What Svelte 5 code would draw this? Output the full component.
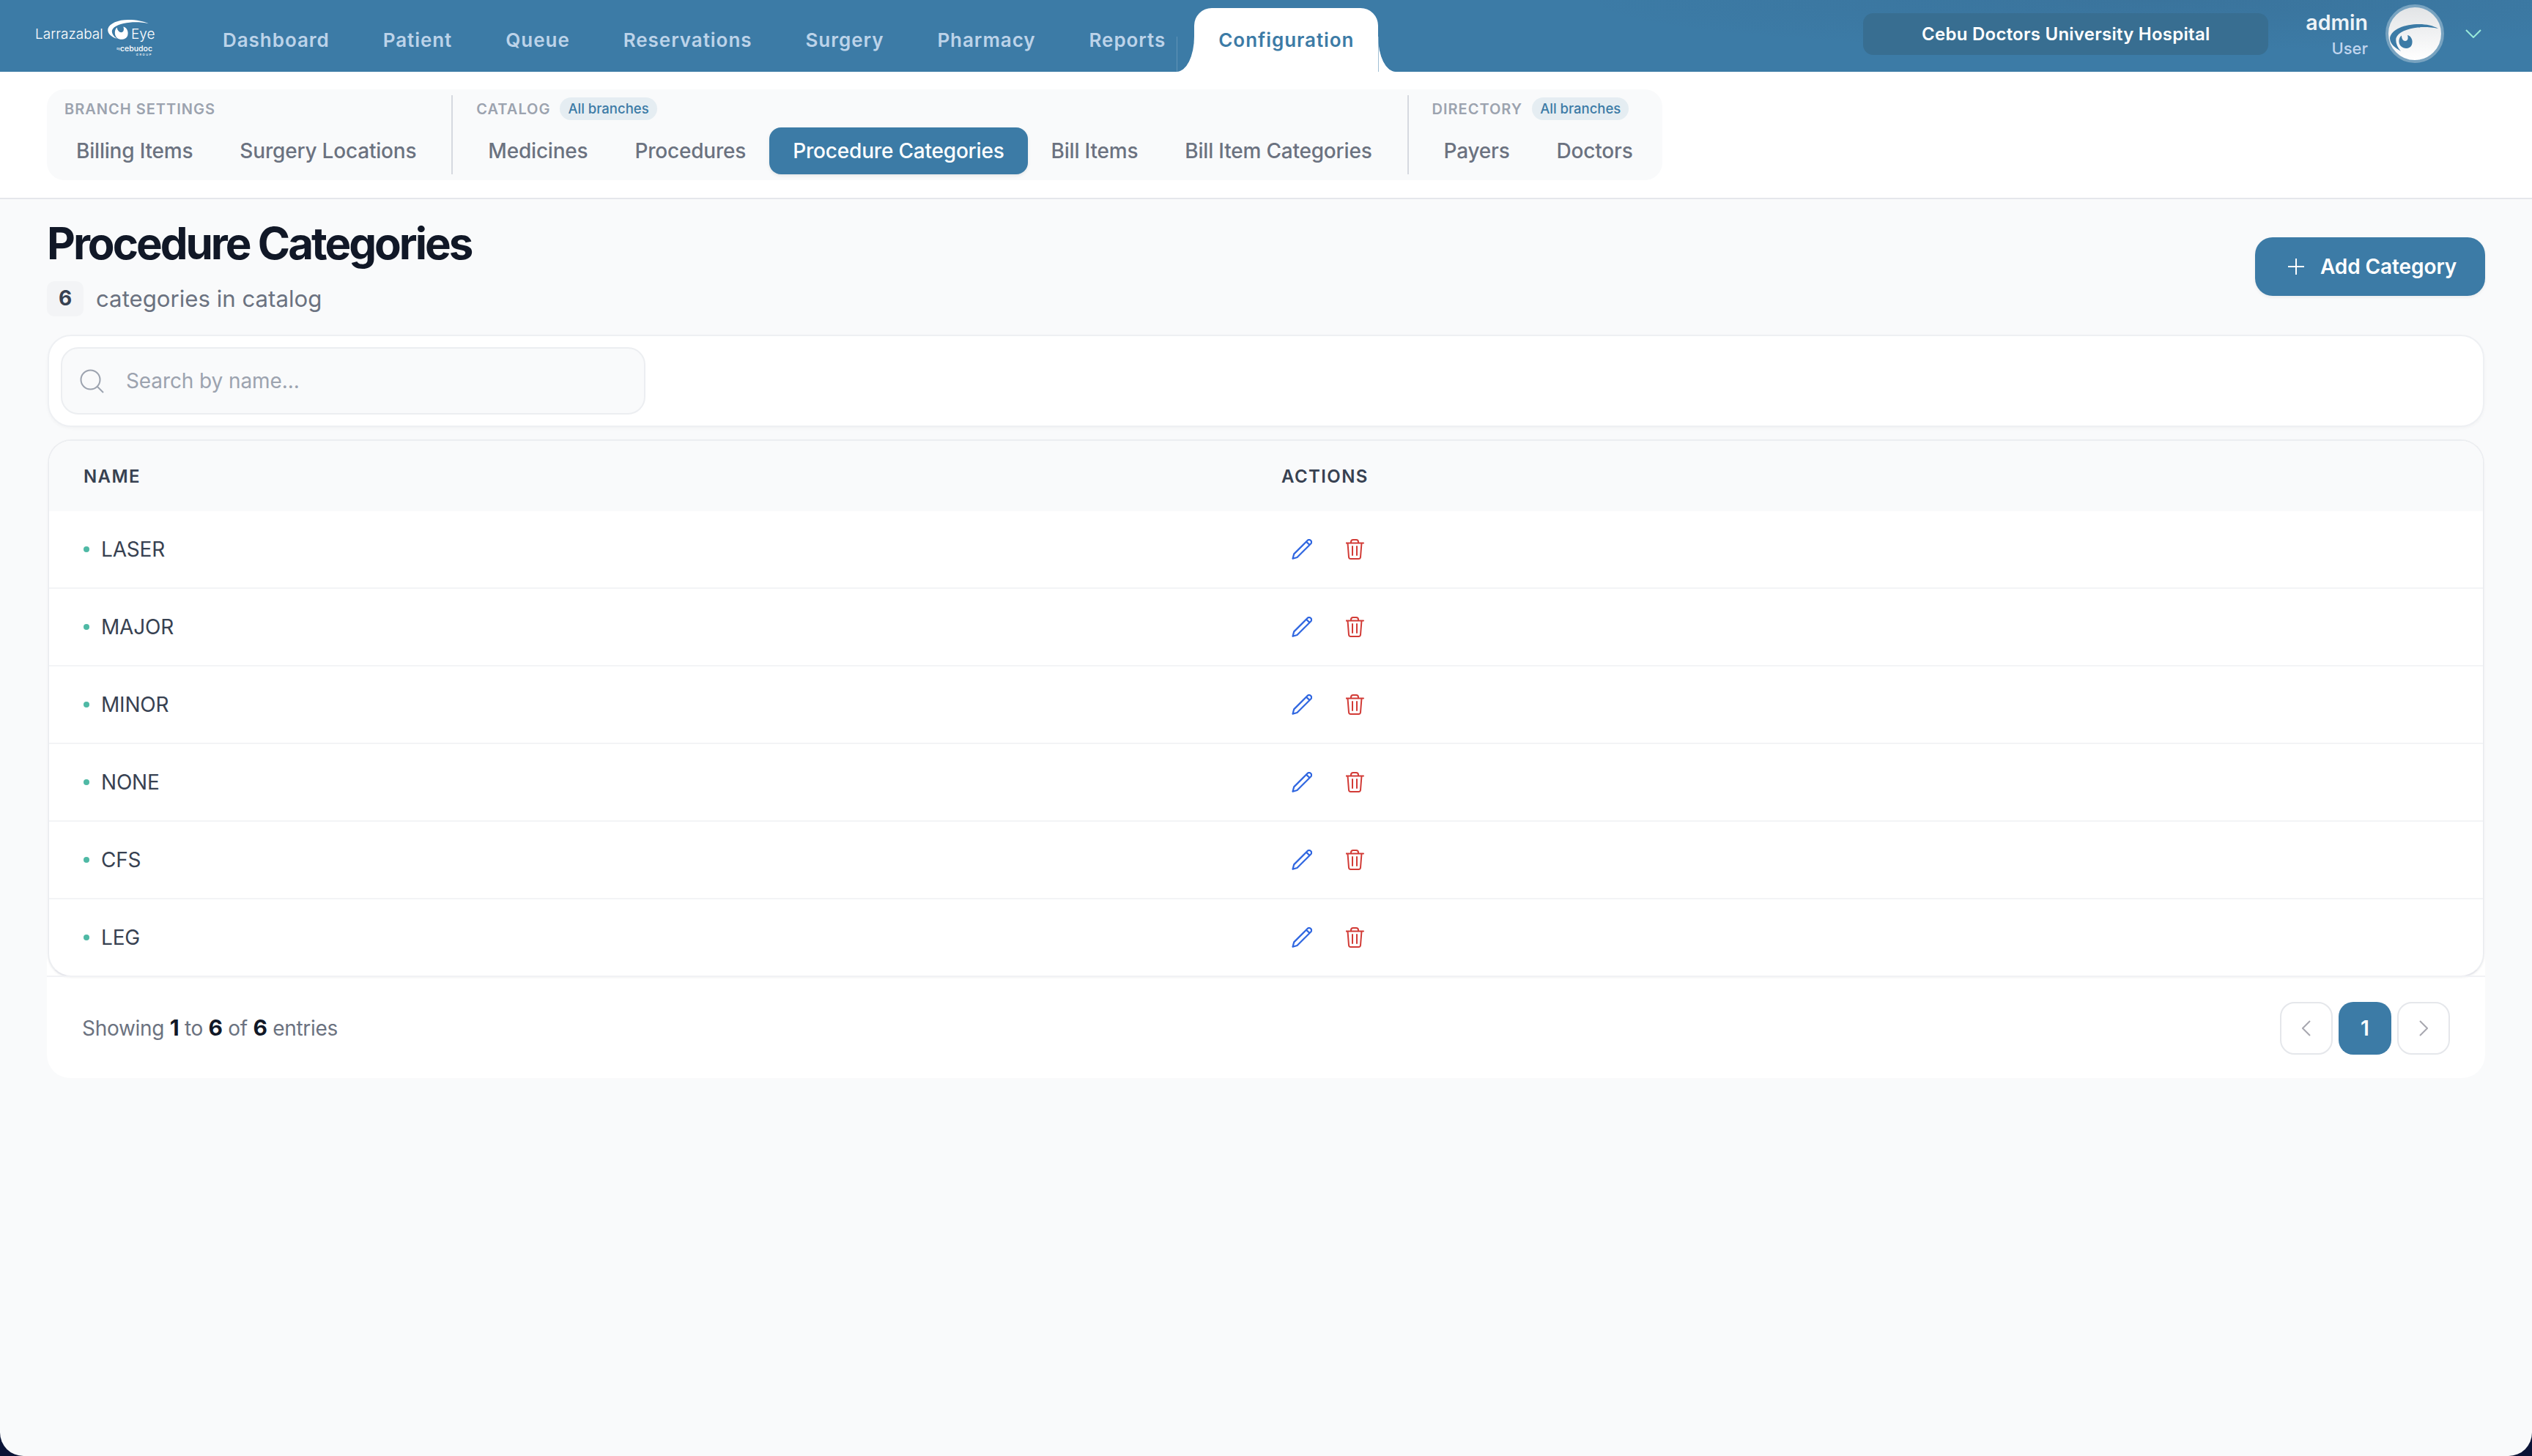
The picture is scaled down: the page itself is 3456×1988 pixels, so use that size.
<script>
  const navItems = ["Dashboard", "Patient", "Queue", "Reservations", "Surgery", "Pharmacy", "Reports"];

  const sections = [
    { label: "Branch Settings", shared: false, tabs: ["Billing Items", "Surgery Locations"] },
    { label: "Catalog", shared: true, tabs: ["Medicines", "Procedures", "Procedure Categories", "Bill Items", "Bill Item Categories"] },
    { label: "Directory", shared: true, tabs: ["Payers", "Doctors"] }
  ];

  const activeTab = "Procedure Categories";
  const categories = ["LASER", "MAJOR", "MINOR", "NONE", "CFS", "LEG"];
</script>

<div class="window">
  <header class="topbar">
    <div class="logo">
      <span class="logo-name">Larrazabal</span>
      <svg class="logo-eye" viewBox="0 0 60 46" aria-hidden="true">
        <path d="M1 14 C3 6 16 1 30 1 C42 1 52 3 59 6.5 C50 4.5 40 4 32 5 C20 6 9 10 7 16 C6 20 9 25 14 28 C7 26 0 21 1 14 Z" fill="#fff" />
        <path d="M14 12 C10 15 10 23 14 27 C19 31 27 29 29 24 C31 18 28 12 23 11 C24.5 15 23.5 19 20 19 C17 19 14.5 16 14 12 Z" fill="#fff" />
      </svg>
      <span class="logo-name eye-word">Eye</span>
      <span class="logo-sub"><small>by</small>cebudoc<em>GROUP</em></span>
    </div>

    <nav class="main-nav">
      {#each navItems as item}
        <span class="nav-item">{item}</span>
      {/each}
      <span class="nav-item active">Configuration</span>
    </nav>

    <div class="top-right">
      <div class="branch">Cebu Doctors University Hospital</div>
      <div class="user">
        <span class="user-name">admin</span>
        <span class="user-role">User</span>
      </div>
      <div class="avatar">
        <svg viewBox="0 0 72 72" aria-hidden="true">
          <path d="M2 42 C4 30 22 23 42 23 C52 23 61 25 68 29 C58 27 48 26.5 40 27.5 C26 29 13 34 10.5 42 C9.5 48 12 54 17 60 C9 55 2 50 2 42 Z" fill="#3c7ba6" />
          <path d="M18 38.5 C14 41 13 49 17 53 C22 58 30 56.5 32 51 C34 45 31 39 26 38 C27.5 42 26.5 46 23 46 C20 46 18 43 18 38.5 Z" fill="#3c7ba6" />
        </svg>
      </div>
      <svg class="user-chevron" viewBox="0 0 22 12" aria-hidden="true">
        <path d="M1 1 L11 11 L21 1" fill="none" stroke="#99ead9" stroke-width="2" />
      </svg>
    </div>
  </header>

  <div class="subnav">
    <div class="tabs">
      {#each sections as section, i}
        {#if i > 0}<div class="divider"></div>{/if}
        <div class="tab-section">
          <div class="section-head">
            <span class="section-label">{section.label}</span>
            {#if section.shared}<span class="shared-pill">All branches</span>{/if}
          </div>
          <div class="section-tabs">
            {#each section.tabs as tab}
              <span class="tab" class:current={tab === activeTab}>{tab}</span>
            {/each}
          </div>
        </div>
      {/each}
    </div>
  </div>

  <main class="page">
    <div class="page-head">
      <div>
        <h1>Procedure Categories</h1>
        <div class="count-line">
          <span class="count">6</span>
          <span>categories in catalog</span>
        </div>
      </div>
      <button class="add-btn">
        <svg viewBox="0 0 22 22" aria-hidden="true">
          <path d="M11 0 V22 M0 11 H22" fill="none" stroke="#fff" stroke-width="2" />
        </svg>
        Add Category
      </button>
    </div>

    <div class="search-card">
      <div class="search-box">
        <svg viewBox="0 0 33 33" aria-hidden="true">
          <circle cx="14.5" cy="14.5" r="13" fill="none" stroke="#9ca3af" stroke-width="2" />
          <path d="M24 24 L32 32" fill="none" stroke="#9ca3af" stroke-width="2" />
        </svg>
        <span class="placeholder">Search by name...</span>
      </div>
    </div>

    <div class="list-card">
      <div class="table">
        <div class="row head">
          <span>Name</span>
          <span>Actions</span>
        </div>
        {#each categories as name}
          <div class="row">
            <div class="name"><i class="dot"></i>{name}</div>
            <div class="actions">
              <svg viewBox="0 0 28 28" aria-hidden="true">
                <path d="M21.8 1.8 A3.2 3.2 0 0 1 26.3 6.3 L7.5 25 L1.5 26.8 L3.2 20.4 Z M20 3.6 L24.5 8" fill="none" stroke="#2f66e0" stroke-width="2.2" stroke-linejoin="round" />
              </svg>
              <svg viewBox="1 0 28 28" aria-hidden="true">
                <path d="M1 5.5 H25 M8 5.5 V4 C8 2 9.5 1 11 1 H15 C16.5 1 18 2 18 4 V5.5 M3.5 5.5 L5 24.5 C5.1 26 6.2 27 7.5 27 H18.5 C19.8 27 20.9 26 21 24.5 L22.5 5.5 M10 10 V22 M16 10 V22" fill="none" stroke="#d23b36" stroke-width="2" stroke-linecap="round" stroke-linejoin="round" />
              </svg>
            </div>
          </div>
        {/each}
      </div>

      <div class="table-foot">
        <div class="showing">Showing <b>1</b> to <b>6</b> of <b>6</b> entries</div>
        <div class="pager">
          <span class="page-btn">
            <svg viewBox="0 0 12 22" aria-hidden="true"><path d="M11 1 L1 11 L11 21" fill="none" stroke="#a8a8b0" stroke-width="2" /></svg>
          </span>
          <span class="page-btn on">1</span>
          <span class="page-btn">
            <svg viewBox="0 0 12 22" aria-hidden="true"><path d="M1 1 L11 11 L1 21" fill="none" stroke="#a8a8b0" stroke-width="2" /></svg>
          </span>
        </div>
      </div>
    </div>
  </main>
</div>

<style>
  :global(body) {
    background: #0b1437;
    font-family: Inter, "Liberation Sans", sans-serif;
    -webkit-font-smoothing: antialiased;
  }

  .window {
    height: 1988px;
    overflow: hidden;
    border-radius: 0 0 32px 32px;
    background: #f9fafb;
  }

  /* top bar */
  .topbar {
    height: 98px;
    display: flex;
    align-items: stretch;
    background: radial-gradient(ellipse 800px 70px at 2950px 0, rgba(40, 50, 70, 0.1), transparent), #3c7ba6;
    padding-left: 48px;
    box-sizing: border-box;
  }

  .logo {
    position: relative;
    width: 160px;
    height: 46px;
    margin-top: 26px;
    color: #fff;
  }

  .logo-name {
    position: absolute;
    left: 0;
    top: 10px;
    font-size: 19px;
    font-weight: 300;
    line-height: 22px;
  }

  .eye-word {
    left: 131px;
  }

  .logo-eye {
    position: absolute;
    left: 98px;
    top: 0;
    width: 58px;
    height: 44px;
  }

  .logo-sub {
    position: absolute;
    right: 0;
    top: 35px;
    font-size: 10.5px;
    font-weight: 500;
    line-height: 11px;
  }

  .logo-sub small {
    font-size: 4px;
    vertical-align: top;
  }

  .logo-sub em {
    display: block;
    font-size: 4px;
    font-style: normal;
    letter-spacing: 1.6px;
    line-height: 5px;
    text-align: right;
  }

  .main-nav {
    display: flex;
    align-items: stretch;
    margin-left: 96px;
    gap: 73px;
  }

  .nav-item {
    display: flex;
    align-items: center;
    padding-top: 10px;
    font-size: 26px;
    font-weight: 600;
    letter-spacing: 0.95px;
    color: #bcd3e9;
  }

  .nav-item.active {
    position: relative;
    margin-left: -34px;
    margin-top: 11px;
    padding: 0 33px;
    background: #fff;
    color: #3c7ba6;
    border-radius: 24px 24px 0 0;
  }

  .nav-item.active::before,
  .nav-item.active::after {
    content: "";
    position: absolute;
    bottom: 0;
    width: 24px;
    height: 48px;
    background: #3c7ba6;
  }

  .nav-item.active::before {
    left: -24px;
    border-bottom-right-radius: 24px 48px;
    box-shadow: 12px 12px 0 12px #fff;
    clip-path: inset(0 0 0 0);
  }

  .nav-item.active::after {
    right: -24px;
    border-bottom-left-radius: 24px 48px;
    box-shadow: -12px 12px 0 12px #fff;
    clip-path: inset(0 0 0 0);
  }

  .top-right {
    margin-left: auto;
    display: flex;
    align-items: center;
    padding-right: 69px;
  }

  .branch {
    width: 553px;
    height: 57px;
    margin-top: -6px;
    margin-right: 51px;
    border-radius: 14px;
    background: #386e91;
    color: #fff;
    font-size: 24px;
    font-weight: 600;
    letter-spacing: 0.25px;
    line-height: 57px;
    text-align: center;
  }

  .user {
    display: flex;
    flex-direction: column;
    align-items: flex-end;
    gap: 8px;
    margin-right: 24px;
    margin-top: -4px;
  }

  .user-name {
    font-size: 28.5px;
    font-weight: 600;
    line-height: 30px;
    color: #eef3f7;
  }

  .user-role {
    font-size: 22px;
    font-weight: 500;
    line-height: 24px;
    color: #c0d5ee;
  }

  .avatar {
    width: 80px;
    height: 80px;
    margin-top: -6px;
    box-sizing: border-box;
    border: 4px solid #78a3c0;
    border-radius: 50%;
    background: linear-gradient(#e2e4e6, #fff);
    overflow: hidden;
  }

  .avatar svg {
    display: block;
    width: 100%;
    height: 100%;
  }

  .user-chevron {
    width: 22px;
    height: 12px;
    margin-left: 29px;
    margin-top: -6px;
  }

  /* sub navigation */
  .subnav {
    height: 174px;
    box-sizing: border-box;
    padding: 24px 0 0 64px;
    background: #fff;
    border-bottom: 2px solid #e5e7eb;
  }

  .tabs {
    display: inline-flex;
    height: 124px;
    box-sizing: border-box;
    padding: 8px;
    border-radius: 24px;
    background: #f9fafb;
  }

  .divider {
    width: 2px;
    margin: 0 16px;
    background: #d6d9e0;
  }

  .tab-section {
    display: flex;
    flex-direction: column;
    justify-content: space-between;
  }

  .section-head {
    height: 29px;
    padding: 4px 16px 0;
    display: flex;
    align-items: center;
    gap: 13px;
  }

  .section-label {
    font-size: 20px;
    font-weight: 600;
    letter-spacing: 1px;
    text-transform: uppercase;
    color: #9ca3af;
  }

  .shared-pill {
    height: 31px;
    padding: 0 11px;
    border-radius: 16px;
    background: #e5edf2;
    color: #3c7ba6;
    font-size: 18.5px;
    font-weight: 500;
    line-height: 31px;
  }

  .section-tabs {
    display: flex;
  }

  .tab {
    height: 64px;
    padding: 0 32px;
    border-radius: 16px;
    font-size: 28px;
    font-weight: 500;
    letter-spacing: -0.2px;
    line-height: 64px;
    color: #6b7280;
  }

  .tab.current {
    background: #3c7ba6;
    color: #fff;
    box-shadow: 0 2px 4px rgba(0, 0, 0, 0.08);
  }

  /* page */
  .page {
    padding: 24px 64px 0;
  }

  .page-head {
    display: flex;
    justify-content: space-between;
    align-items: flex-start;
    height: 136px;
    margin-bottom: 25px;
  }

  h1 {
    margin: 0;
    font-size: 60px;
    font-weight: 700;
    line-height: 72px;
    letter-spacing: -3px;
    color: #111827;
  }

  .count-line {
    display: flex;
    align-items: center;
    gap: 17px;
    margin-top: 16px;
    font-size: 31.2px;
    color: #6b7280;
  }

  .count {
    width: 50px;
    height: 48px;
    border-radius: 10px;
    background: #f3f4f6;
    color: #374151;
    font-size: 28px;
    font-weight: 700;
    line-height: 46px;
    text-align: center;
  }

  .add-btn {
    display: flex;
    align-items: center;
    gap: 22px;
    height: 80px;
    width: 314px;
    margin-top: 28px;
    padding: 0 0 0 45px;
    border: 0;
    border-radius: 24px;
    background: #3c7ba6;
    color: #fff;
    font-family: inherit;
    font-size: 28px;
    font-weight: 600;
    letter-spacing: -0.1px;
    box-shadow: 0 2px 4px rgba(0, 0, 0, 0.06);
  }

  .add-btn svg {
    width: 22px;
    height: 22px;
  }

  .search-card {
    height: 126px;
    box-sizing: border-box;
    margin: 0 1px;
    padding: 15px 16px;
    border: 2px solid #eef0f3;
    border-radius: 32px;
    background: #fff;
    box-shadow: 0 2px 4px rgba(0, 0, 0, 0.03);
  }

  .search-box {
    display: flex;
    align-items: center;
    gap: 30px;
    width: 798px;
    height: 92px;
    box-sizing: border-box;
    padding-left: 24px;
    border: 2px solid #eceef1;
    border-radius: 24px;
    background: #f9fafb;
  }

  .search-box svg {
    width: 33px;
    height: 33px;
  }

  .placeholder {
    font-size: 28px;
    letter-spacing: -0.1px;
    color: #9ca3af;
  }

  .list-card {
    margin-top: 17px;
    border-radius: 32px;
    background: #fff;
  }

  .table {
    margin: 0 1px;
    border: 2px solid #eceef1;
    border-bottom-color: #e6e7ec;
    border-radius: 32px;
    background: #fff;
    overflow: hidden;
    box-shadow: 0 1px 3px rgba(0, 0, 0, 0.06);
  }

  .row {
    display: grid;
    grid-template-columns: 1635px 1fr;
    align-items: center;
    height: 106px;
    box-sizing: border-box;
    padding-left: 47px;
    border-bottom: 2px solid #f3f4f6;
    font-size: 28px;
    letter-spacing: -0.2px;
    color: #374151;
  }

  .row:last-child {
    height: 104px;
    border-bottom: 0;
  }

  .row.head {
    height: 96px;
    border-bottom: 0;
    background: #f9fafb;
    font-size: 24px;
    font-weight: 600;
    letter-spacing: 1.4px;
    text-transform: uppercase;
  }

  .name {
    display: flex;
    align-items: center;
    gap: 16px;
  }

  .dot {
    width: 8px;
    height: 8px;
    border-radius: 50%;
    background: #4fb9a5;
  }

  .actions {
    display: flex;
    align-items: center;
    gap: 46px;
    padding-left: 14px;
  }

  .actions svg {
    width: 28px;
    height: 28px;
  }

  .table-foot {
    display: flex;
    justify-content: space-between;
    align-items: center;
    height: 136px;
    padding: 2px 48px 0;
    border-top: 2px solid #f1f2f5;
    margin-top: -2px;
  }

  .showing {
    font-size: 28px;
    letter-spacing: -0.3px;
    color: #6b7280;
  }

  .showing b {
    font-size: 30px;
    line-height: 1;
    font-weight: 700;
    color: #111827;
  }

  .pager {
    display: flex;
    gap: 8px;
  }

  .page-btn {
    display: flex;
    align-items: center;
    justify-content: center;
    width: 72px;
    height: 72px;
    box-sizing: border-box;
    border: 2px solid #e5e7eb;
    border-radius: 20px;
    background: #fff;
  }

  .page-btn svg {
    width: 12px;
    height: 22px;
  }

  .page-btn.on {
    border: 0;
    background: #3c7ba6;
    color: #fff;
    font-size: 28px;
    font-weight: 600;
  }
</style>
